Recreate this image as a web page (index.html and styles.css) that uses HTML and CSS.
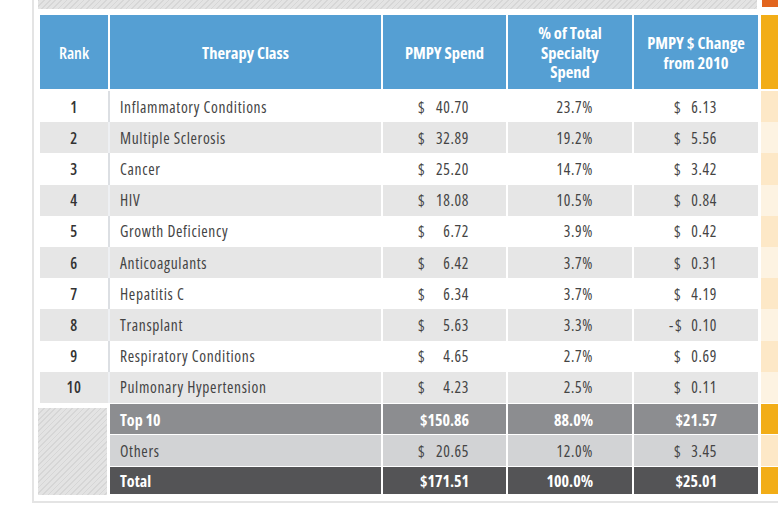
FILE: index.html
```html
<!DOCTYPE html>
<html>
<head>
<meta charset="utf-8">
<link rel="stylesheet" href="styles.css">
</head>
<body>
<div class="frame">
  <div class="topbar"><div class="hatch-bar"></div><div class="tab-orange"></div></div>
  <div class="table">
    <div class="row head">
      <div class="c rank">Rank</div>
      <div class="c cls">Therapy Class</div>
      <div class="c spend">PMPY Spend</div>
      <div class="c pct">% of Total<br>Specialty<br>Spend</div>
      <div class="c chg">PMPY $ Change<br>from 2010</div>
      <div class="c side"></div>
    </div>
    <div class="row odd">
      <div class="c rank">1</div><div class="c cls">Inflammatory Conditions</div>
      <div class="c spend"><span class="money"><span>$</span><span>40.70</span></span></div>
      <div class="c pct">23.7%</div>
      <div class="c chg"><span class="money sm"><span>$</span><span>6.13</span></span></div>
      <div class="c side"></div>
    </div>
    <div class="row even">
      <div class="c rank">2</div><div class="c cls">Multiple Sclerosis</div>
      <div class="c spend"><span class="money"><span>$</span><span>32.89</span></span></div>
      <div class="c pct">19.2%</div>
      <div class="c chg"><span class="money sm"><span>$</span><span>5.56</span></span></div>
      <div class="c side"></div>
    </div>
    <div class="row odd">
      <div class="c rank">3</div><div class="c cls">Cancer</div>
      <div class="c spend"><span class="money"><span>$</span><span>25.20</span></span></div>
      <div class="c pct">14.7%</div>
      <div class="c chg"><span class="money sm"><span>$</span><span>3.42</span></span></div>
      <div class="c side"></div>
    </div>
    <div class="row even">
      <div class="c rank">4</div><div class="c cls">HIV</div>
      <div class="c spend"><span class="money"><span>$</span><span>18.08</span></span></div>
      <div class="c pct">10.5%</div>
      <div class="c chg"><span class="money sm"><span>$</span><span>0.84</span></span></div>
      <div class="c side"></div>
    </div>
    <div class="row odd">
      <div class="c rank">5</div><div class="c cls">Growth Deficiency</div>
      <div class="c spend"><span class="money"><span>$</span><span>6.72</span></span></div>
      <div class="c pct">3.9%</div>
      <div class="c chg"><span class="money sm"><span>$</span><span>0.42</span></span></div>
      <div class="c side"></div>
    </div>
    <div class="row even">
      <div class="c rank">6</div><div class="c cls">Anticoagulants</div>
      <div class="c spend"><span class="money"><span>$</span><span>6.42</span></span></div>
      <div class="c pct">3.7%</div>
      <div class="c chg"><span class="money sm"><span>$</span><span>0.31</span></span></div>
      <div class="c side"></div>
    </div>
    <div class="row odd">
      <div class="c rank">7</div><div class="c cls">Hepatitis C</div>
      <div class="c spend"><span class="money"><span>$</span><span>6.34</span></span></div>
      <div class="c pct">3.7%</div>
      <div class="c chg"><span class="money sm"><span>$</span><span>4.19</span></span></div>
      <div class="c side"></div>
    </div>
    <div class="row even">
      <div class="c rank">8</div><div class="c cls">Transplant</div>
      <div class="c spend"><span class="money"><span>$</span><span>5.63</span></span></div>
      <div class="c pct">3.3%</div>
      <div class="c chg"><span class="money sm"><span><span class="minus">-</span>$</span><span>0.10</span></span></div>
      <div class="c side"></div>
    </div>
    <div class="row odd">
      <div class="c rank">9</div><div class="c cls">Respiratory Conditions</div>
      <div class="c spend"><span class="money"><span>$</span><span>4.65</span></span></div>
      <div class="c pct">2.7%</div>
      <div class="c chg"><span class="money sm"><span>$</span><span>0.69</span></span></div>
      <div class="c side"></div>
    </div>
    <div class="row even">
      <div class="c rank">10</div><div class="c cls">Pulmonary Hypertension</div>
      <div class="c spend"><span class="money"><span>$</span><span>4.23</span></span></div>
      <div class="c pct">2.5%</div>
      <div class="c chg"><span class="money sm"><span>$</span><span>0.11</span></span></div>
      <div class="c side"></div>
    </div>
    <div class="summary">
      <div class="hatch"></div>
      <div class="sumrows">
        <div class="srow top10">
          <div class="c cls">Top 10</div>
          <div class="c spend"><span class="money tight">$150.86</span></div>
          <div class="c pct">88.0%</div>
          <div class="c chg"><span class="money sm tight">$21.57</span></div>
          <div class="c side"></div>
        </div>
        <div class="srow others">
          <div class="c cls">Others</div>
          <div class="c spend"><span class="money"><span>$</span><span>20.65</span></span></div>
          <div class="c pct">12.0%</div>
          <div class="c chg"><span class="money sm"><span>$</span><span>3.45</span></span></div>
          <div class="c side"></div>
        </div>
        <div class="srow total">
          <div class="c cls">Total</div>
          <div class="c spend"><span class="money tight">$171.51</span></div>
          <div class="c pct">100.0%</div>
          <div class="c chg"><span class="money sm tight">$25.01</span></div>
          <div class="c side"></div>
        </div>
      </div>
    </div>
  </div>
</div>
</body>
</html>
```
FILE: styles.css
```css
html, body {
  margin: 0;
  padding: 0;
  background: #ffffff;
  overflow: hidden;
}

body {
  font-family: "Open Sans", "DejaVu Sans Condensed", sans-serif;
  font-stretch: 75%;
  font-size: 15.5px;
  color: #444444;
}

.frame {
  margin-left: 32px;
  width: 800px;
  border-left: 2px solid #e4e4e4;
  border-bottom: 2px solid #e4e4e4;
  padding: 0 0 7px 4px;
}

.topbar {
  display: flex;
  height: 9px;
  margin-bottom: 6px;
}

.hatch-bar {
  width: 719px;
  height: 9px;
  background: repeating-linear-gradient(135deg, #d6d6d6 0 1.2px, #e3e3e3 1.2px 4px);
}

.tab-orange {
  margin-left: 5px;
  width: 30px;
  height: 7px;
  background: #e2651f;
}

.table {
  margin-left: 2px;
}

.row {
  display: grid;
  grid-template-columns: 70px 273px 125px 126px 127px 40px;
  height: 31.2px;
}

.odd, .even, .others {
  letter-spacing: 0.65px;
}

.srow {
  display: grid;
  grid-template-columns: 273px 125px 126px 127px 40px;
}

.c {
  box-sizing: border-box;
  border-right: 2px solid #ffffff;
  display: flex;
  align-items: center;
  white-space: nowrap;
}

.rank {
  justify-content: center;
  color: #333333;
  font-weight: 600;
  border-right-color: #dcdfe3;
}

.cls {
  padding-left: 10px;
}

.spend {
  padding-left: 35px;
}

.pct {
  justify-content: flex-end;
  padding-right: 39px;
}

.chg {
  padding-left: 40px;
  border-right-width: 3px;
}

.side {
  border-right: 0;
}

.money {
  display: flex;
  justify-content: space-between;
  width: 51px;
}

.money.sm {
  width: 43px;
}

.money.tight {
  justify-content: flex-end;
}

.minus {
  margin-left: -5px;
  margin-right: 1px;
}

/* header */
.head {
  height: 74px;
  margin-bottom: 2px;
  font-weight: bold;
  font-size: 16.5px;
  line-height: 19.5px;
}

.head .c {
  background: #559fd3;
  color: #ffffff;
  justify-content: center;
  text-align: center;
  padding: 1px 0 0 0;
  border-right-color: #ffffff;
}

.head .side {
  background: #f2ad17;
}

.odd .c { background: #ffffff; }
.odd .side { background: #fde8c7; }
.even .c { background: #e6e6e6; }
.even .side { background: #fdf3e2; }
.even .rank { border-right-color: #eef0f3; }

/* summary */
.summary {
  display: flex;
  margin-top: 1px;
}

.hatch {
  margin: 4px 3px -1px -2px;
  width: 69px;
  background: repeating-linear-gradient(135deg, #d6d6d6 0 1.2px, #e3e3e3 1.2px 4px);
}

.sumrows {
  display: flex;
  flex-direction: column;
  gap: 1px;
}

.srow .c {
  padding-top: 2px;
}

.top10, .total {
  font-weight: bold;
  font-size: 16px;
  color: #ffffff;
}

.top10 { height: 30px; }
.others { height: 31px; }
.total { height: 27px; }

.top10 .c { background: #8c8d90; }
.others .c { background: #d2d3d5; }
.total .c { background: #545456; }
.top10 .side, .total .side { background: #f2ad17; }
.others .side { background: #fde8c7; }
```
